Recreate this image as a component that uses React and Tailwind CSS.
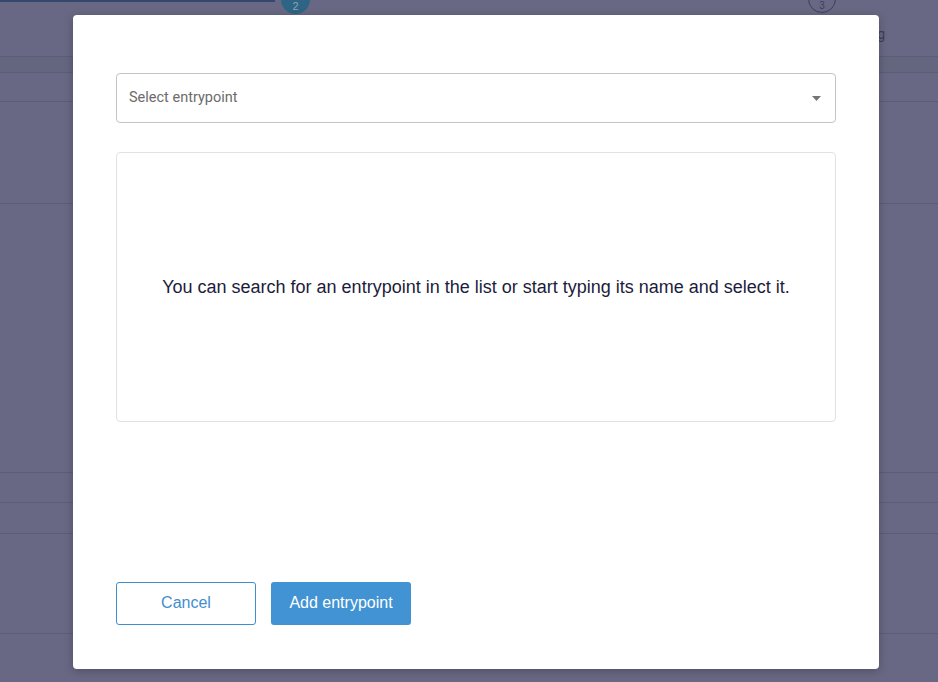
import React from 'react';

const rows = [
    { h: 'h-[16px]', bg: 'bg-[#64657f]' },
    { h: 'h-[29px]', bg: '' },
    { h: 'h-[102px]', bg: '' },
    { h: 'h-[269px]', bg: '' },
    { h: 'h-[30px]', bg: '' },
    { h: 'h-[31px]', bg: '' },
    { h: 'h-[100px]', bg: '' },
];

const EntrypointModal = () => (
    <div className="absolute left-[73px] top-[15px] w-[806px] h-[654px] bg-white rounded-[4px] shadow-[0_2px_8px_rgba(0,0,0,0.25)] px-[43px] pt-[58px] pb-[44px] flex flex-col">
        <div className="h-[50px] border border-[#c4c4c4] rounded-[4px] flex items-center justify-between pl-[12px] pr-[14px]">
            <span className="text-[14.5px] text-[#6b6b6b] font-['Roboto',sans-serif]">Select entrypoint</span>
            <svg width="9" height="5" viewBox="0 0 9 5"><path d="M0 0h9L4.5 5z" fill="#757575" /></svg>
        </div>

        <div className="mt-[29px] h-[270px] border border-[#e2e2e2] rounded-[4px] flex items-center justify-center">
            <p className="text-[18px] text-[#1c1c3c] font-['Liberation_Sans',Arial,sans-serif]">
                You can search for an entrypoint in the list or start typing its name and select it.
            </p>
        </div>

        <div className="mt-auto flex gap-[15px] font-['Liberation_Sans',Arial,sans-serif] text-[16px]">
            <button className="w-[140px] h-[43px] border border-[#3f8fce] rounded-[3px] text-[#3f8fce] bg-white pb-[2px]">Cancel</button>
            <button className="w-[140px] h-[43px] rounded-[3px] bg-[#4193d3] text-white pb-[2px]">Add entrypoint</button>
        </div>
    </div>
);

export default function App() {
    return (
        <div className="relative w-[938px] h-[682px] overflow-hidden bg-[#686884]">
            {/* dimmed page behind the dialog */}
            <div className="relative h-[57px] border-b border-[#5c5d77]">
                <div className="h-[2px] w-[275px] bg-[#34476d]" />
                <div className="absolute left-[281px] top-[-15px] w-[29px] h-[29px] rounded-full bg-[#2e6584] flex items-end justify-center pb-[2px]">
                    <span className="text-[11px] leading-none text-[#8aa4b8] font-['Liberation_Sans',sans-serif]">2</span>
                </div>
                <div className="absolute left-[808px] top-[-15px] w-[28px] h-[28px] rounded-full border border-[#3d3e5c] flex items-end justify-center pb-[1px]">
                    <span className="text-[10px] leading-none text-[#3d3e5c] font-['Liberation_Sans',sans-serif]">3</span>
                </div>
                <span className="absolute left-[866px] top-[24px] text-[14px] text-[#3e3f58] font-['Roboto',sans-serif]">ing</span>
            </div>
            {rows.map((r, i) => (
                <div key={i} className={`${r.h} ${r.bg} border-b border-[#5c5d77]`} />
            ))}

            <EntrypointModal />
        </div>
    );
}
